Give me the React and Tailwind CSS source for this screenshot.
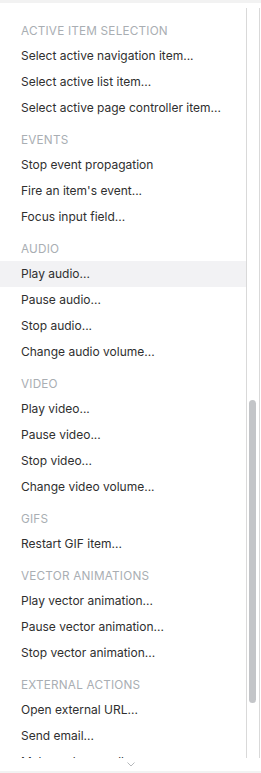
const sections = [
  {
    title: 'Active item selection',
    items: ['Select active navigation item...', 'Select active list item...', 'Select active page controller item...'],
  },
  {
    title: 'Events',
    items: ['Stop event propagation', "Fire an item's event...", 'Focus input field...'],
  },
  {
    title: 'Audio',
    items: ['Play audio...', 'Pause audio...', 'Stop audio...', 'Change audio volume...'],
  },
  {
    title: 'Video',
    items: ['Play video...', 'Pause video...', 'Stop video...', 'Change video volume...'],
  },
  {
    title: 'GIFs',
    items: ['Restart GIF item...'],
  },
  {
    title: 'Vector animations',
    items: ['Play vector animation...', 'Pause vector animation...', 'Stop vector animation...'],
  },
  {
    title: 'External actions',
    items: ['Open external URL...', 'Send email...', 'Make a phone call...'],
  },
]

export default function App() {
  return (
    <div
      className="flex h-[773px] w-[261px] flex-col overflow-hidden bg-white"
      style={{ fontFamily: 'Inter, "Liberation Sans", sans-serif' }}
    >
      <div className="h-[3px] shrink-0 bg-[#f2f2f2]" />
      <div className="mt-[5px] flex h-[750px] shrink-0">
        <div className="w-[246px] overflow-hidden pt-[4px]">
          {sections.map((section) => (
            <div key={section.title}>
              <div className="h-[31px] pl-[21px] pt-[7px] text-[11.75px] uppercase leading-[24px] tracking-[0.2px] text-[#a9aeb3]">
                {section.title}
              </div>
              {section.items.map((item) => (
                <div
                  key={item}
                  className={`h-[26px] pl-[21px] text-[12px] leading-[26px] text-[#2f2f2f] ${item === 'Play audio...' ? 'bg-[#f2f2f4]' : ''}`}
                >
                  {item}
                </div>
              ))}
            </div>
          ))}
        </div>
        <div className="w-[14px] border-x border-[#d9d9d9] pl-[2px] pt-[392px]">
          <div className="h-[303px] w-[7px] rounded-full bg-[#c3c5c8]" />
        </div>
      </div>
      <div className="flex h-[13px] shrink-0 items-center justify-center pb-[1px]">
        <svg width="8" height="5" viewBox="0 0 8 5" fill="none">
          <path d="M0.5 0.5 L4 4 L7.5 0.5" stroke="#b5b8bb" strokeWidth="1" />
        </svg>
      </div>
      <div className="h-[2px] shrink-0 bg-[#f2f2f2]" />
    </div>
  )
}
